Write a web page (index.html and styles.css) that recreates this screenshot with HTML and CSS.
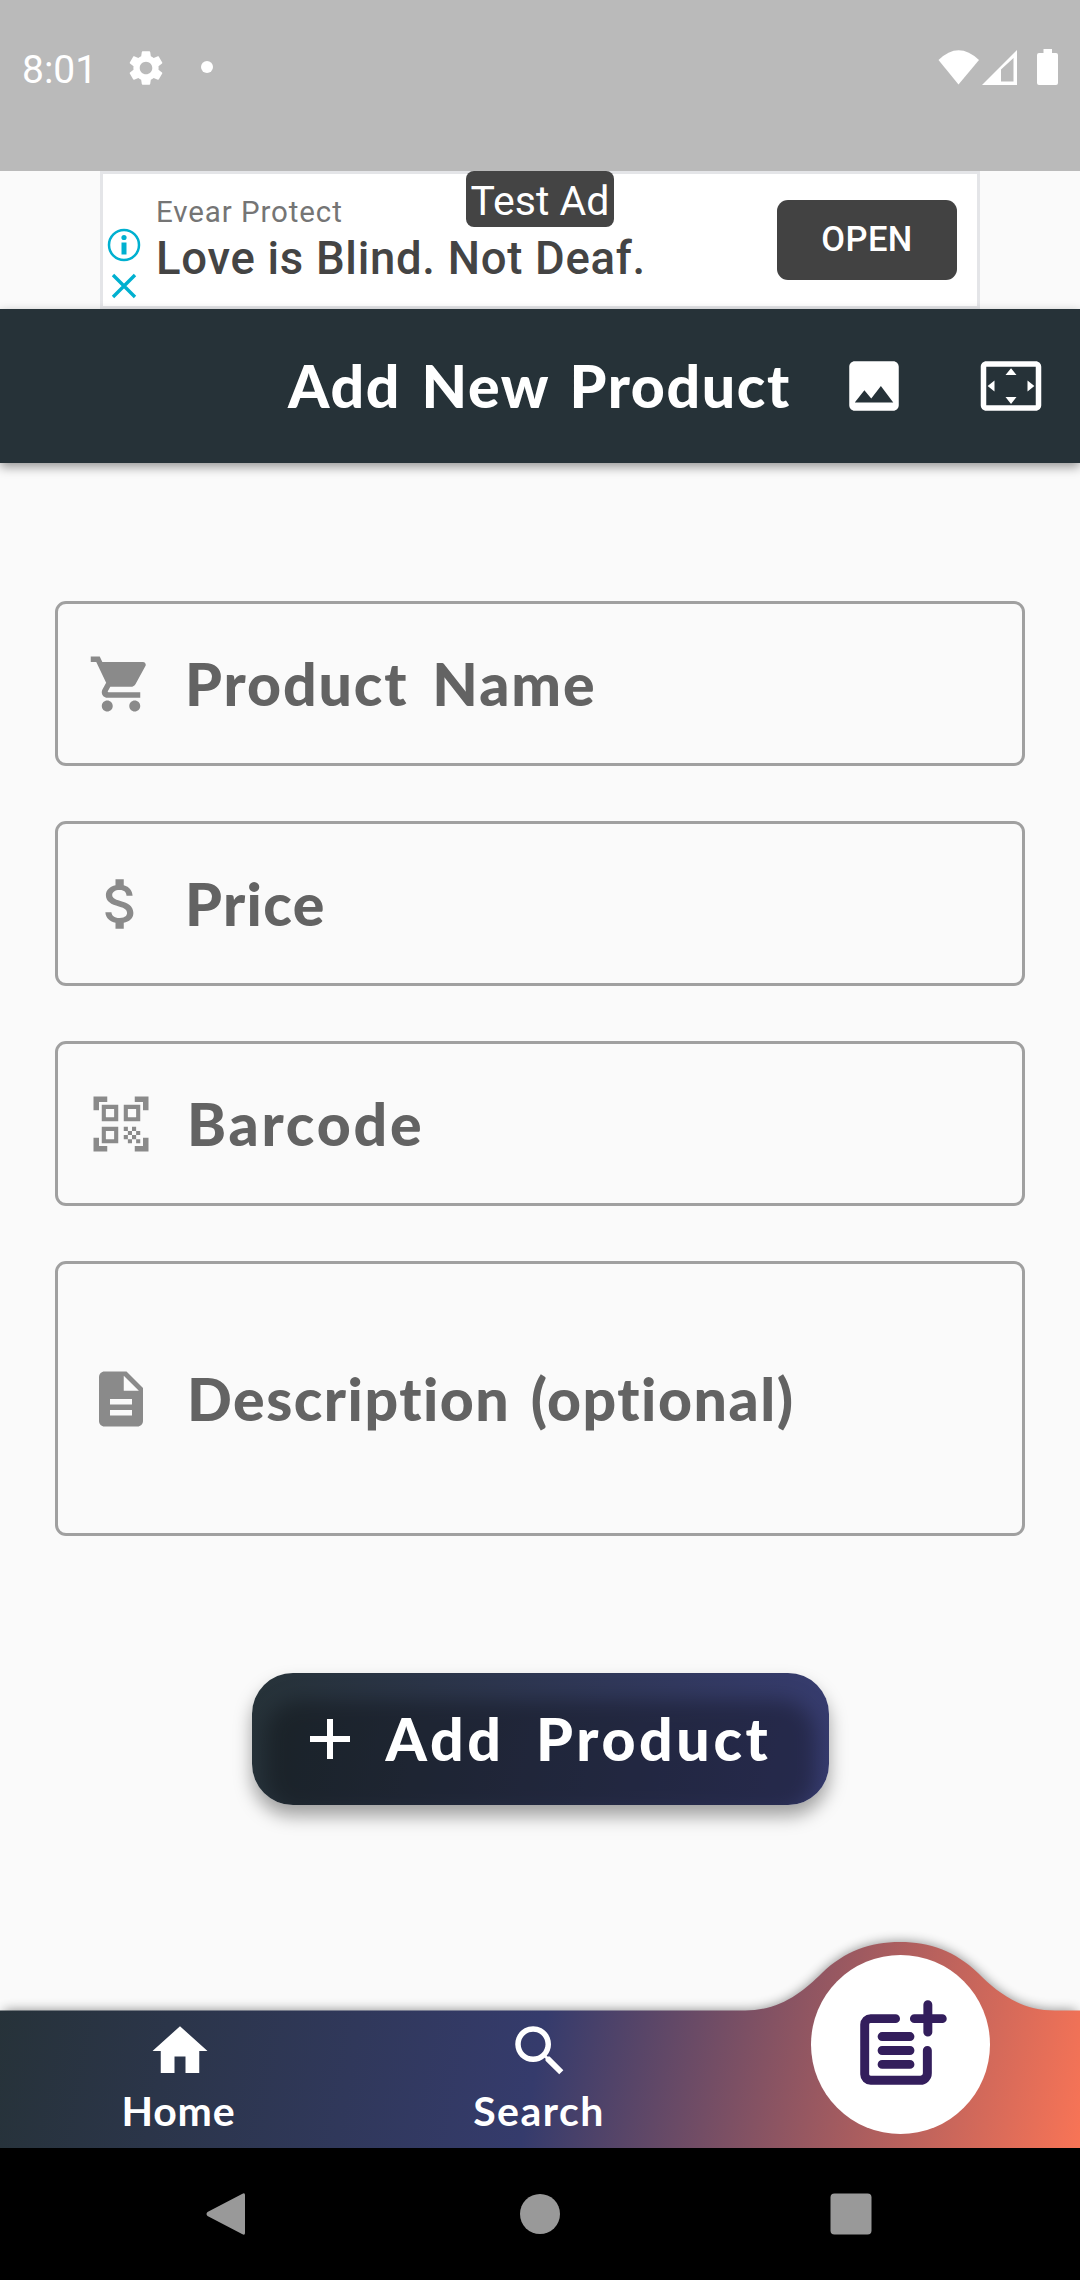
FILE: index.html
```html
<!DOCTYPE html>
<html lang="en">
<head>
<meta charset="utf-8">
<title>Add New Product</title>
<link rel="stylesheet" href="styles.css">
</head>
<body>
<div class="screen">
  <header class="status">
    <span class="time">8:01</span>
    <svg class="gear" viewBox="0 0 24 24"><path d="M19.14 12.94c.04-.3.06-.61.06-.94 0-.32-.02-.64-.07-.94l2.03-1.58c.18-.14.23-.41.12-.61l-1.92-3.32c-.12-.22-.37-.29-.59-.22l-2.39.96c-.5-.38-1.03-.7-1.62-.94l-.36-2.54c-.04-.24-.24-.41-.48-.41h-3.84c-.24 0-.43.17-.47.41l-.36 2.54c-.59.24-1.13.57-1.62.94l-2.39-.96c-.22-.08-.47 0-.59.22L2.74 8.87c-.12.21-.08.47.12.61l2.03 1.58c-.05.3-.09.63-.09.94s.02.64.07.94l-2.03 1.58c-.18.14-.23.41-.12.61l1.92 3.32c.12.22.37.29.59.22l2.39-.96c.5.38 1.03.7 1.62.94l.36 2.54c.05.24.24.41.48.41h3.84c.24 0 .44-.17.47-.41l.36-2.54c.59-.24 1.13-.56 1.62-.94l2.39.96c.22.08.47 0 .59-.22l1.92-3.32c.12-.22.07-.47-.12-.61l-2.01-1.58zM12 15.6c-1.98 0-3.6-1.62-3.6-3.6s1.62-3.6 3.6-3.6 3.6 1.62 3.6 3.6-1.62 3.6-3.6 3.6z"/></svg>
    <span class="dot"></span>
    <svg class="signals" viewBox="0 0 122 38">
      <path d="M.5 11Q20.500-8.500 41 11L20.500 35.500Z"/>
      <path fill-rule="evenodd" d="M44 36L79 1V36ZM63 20.500V32.500H75.500V9Z"/>
      <path d="M105.500 0H114V4H118Q120 4 120 6V34Q120 36 118 36H101Q99 36 99 34V6Q99 4 101 4H105.500Z"/>
    </svg>
  </header>

  <section class="ad-row">
    <div class="ad">
      <div class="ad-choices">
        <svg viewBox="0 0 34 34"><circle cx="17" cy="17" r="15" fill="none" stroke="#00b0d0" stroke-width="2.500"/><circle cx="17" cy="9.500" r="2.600"/><path d="M14.500 14.500h5v12h-5z"/></svg>
        <svg viewBox="0 0 34 34"><path d="M6 6l22 22M28 6L6 28" stroke="#00b0d0" stroke-width="3.400"/></svg>
      </div>
      <div class="ad-copy">
        <span class="ad-brand">Evear Protect</span>
        <span class="ad-title">Love is Blind. Not Deaf.</span>
      </div>
      <span class="ad-open">OPEN</span>
      <span class="ad-badge">Test Ad</span>
    </div>
  </section>

  <div class="appbar">
    <h1 class="title">Add New Product</h1>
    <svg class="icon" viewBox="0 0 24 24"><path d="M21 19V5c0-1.100-.9-2-2-2H5c-1.100 0-2 .9-2 2v14c0 1.100.9 2 2 2h14c1.100 0 2-.9 2-2zM8.500 13.500l2.500 3.010L14.500 12l4.500 6H5l3.500-4.500z"/></svg>
    <svg class="icon" viewBox="0 0 24 24"><path d="M12.010 5.500L10 8h4l-1.990-2.500zM18 10v4l2.500-1.990L18 10zM6 10l-2.500 2.010L6 14v-4zm8 6h-4l2.010 2.500L14 16zm7-13H3c-1.100 0-2 .9-2 2v14c0 1.100.9 2 2 2h18c1.100 0 2-.9 2-2V5c0-1.100-.9-2-2-2zm0 16.010H3V4.990h18v14.020z"/></svg>
  </div>

  <main class="form">
    <div class="field">
      <svg class="icon" viewBox="0 0 24 24"><path d="M7 18c-1.100 0-1.990.9-1.990 2S5.900 22 7 22s2-.9 2-2-.9-2-2-2zM1 2v2h2l3.600 7.590-1.350 2.450c-.16.28-.25.61-.25.96 0 1.100.9 2 2 2h12v-2H7.420c-.14 0-.25-.11-.25-.25l.03-.12.9-1.630h7.450c.75 0 1.410-.41 1.750-1.030l3.580-6.490c.08-.14.12-.31.12-.48 0-.55-.45-1-1-1H5.210l-.94-2H1zm16 16c-1.100 0-1.990.9-1.990 2s.89 2 1.990 2 2-.9 2-2-.9-2-2-2z"/></svg>
      <span class="label l-name">Product Name</span>
    </div>
    <div class="field">
      <svg class="icon" viewBox="0 0 24 24"><path d="M11.800 10.900c-2.270-.59-3-1.200-3-2.150 0-1.090 1.010-1.850 2.700-1.850 1.780 0 2.440.85 2.500 2.100h2.210c-.07-1.720-1.120-3.300-3.210-3.810V3h-3v2.160c-1.940.42-3.500 1.680-3.500 3.610 0 2.310 1.910 3.460 4.700 4.130 2.500.6 3 1.480 3 2.410 0 .69-.49 1.790-2.700 1.790-2.060 0-2.870-.92-2.980-2.100h-2.200c.12 2.190 1.760 3.420 3.680 3.830V21h3v-2.150c1.950-.37 3.500-1.500 3.500-3.550 0-2.840-2.430-3.810-4.700-4.400z"/></svg>
      <span class="label l-price">Price</span>
    </div>
    <div class="field">
      <svg class="icon" viewBox="0 0 24 24"><path d="M9.500 6.500v3h-3v-3h3M11 5H5v6h6V5zm-1.500 9.500v3h-3v-3h3M11 13H5v6h6v-6zm6.500-6.500v3h-3v-3h3M19 5h-6v6h6V5zm-6 8h1.500v1.500H13V13zm1.500 1.500H16V16h-1.500v-1.500zM16 13h1.500v1.500H16V13zm-3 3h1.500v1.500H13V16zm1.500 1.500H16V19h-1.500v-1.500zM16 16h1.500v1.500H16V16zm1.500-1.500H19V16h-1.500v-1.500zm0 3H19V19h-1.500v-1.500zM22 7h-2V4h-3V2h5v5zm0 15v-5h-2v3h-3v2h5zM2 22h5v-2H4v-3H2v5zM2 2v5h2V4h3V2H2z"/></svg>
      <span class="label l-code">Barcode</span>
    </div>
    <div class="field tall">
      <svg class="icon" viewBox="0 0 24 24"><path d="M14 2H6c-1.100 0-1.990.9-1.990 2L4 20c0 1.100.89 2 1.990 2H18c1.100 0 2-.9 2-2V8l-6-6zm2 16H8v-2h8v2zm0-4H8v-2h8v2zm-3-5V3.500L18.500 9H13z"/></svg>
      <span class="label l-desc">Description (optional)</span>
    </div>
    <button class="submit" type="button">
      <svg viewBox="0 0 42 42"><path d="M21 1v40M1 21h40" stroke="#fff" stroke-width="6" fill="none"/></svg>
      <span class="submit-text">Add Product</span>
    </button>
  </main>

  <nav class="tabs">
    <svg class="tabs-bg" viewBox="0 0 1080 236">
      <defs>
        <linearGradient id="bar" gradientUnits="userSpaceOnUse" x1="0" y1="30" x2="1080" y2="236">
          <stop offset="0" stop-color="#263238"/><stop offset=".5" stop-color="#353b6c"/><stop offset="1" stop-color="#f87456"/>
        </linearGradient>
        <filter id="soft" x="-5%" y="-20%" width="110%" height="140%"><feGaussianBlur stdDeviation="6"/></filter>
      </defs>
      <path d="M4 98.500H745C780 98.500 803 80 822 61C845 39 870 30 900 30S955 39 978 61C997 80 1020 98.500 1055 98.500H1076V236H4Z" fill="#000" opacity=".45" filter="url(#soft)"/>
      <path d="M0 98.500H745C780 98.500 803 80 822 61C845 39 870 30 900 30S955 39 978 61C997 80 1020 98.500 1055 98.500H1080V236H0Z" fill="url(#bar)"/>
    </svg>
    <a class="tab tab-home">
      <svg class="icon" viewBox="0 0 24 24"><path d="M10 20v-6h4v6h5v-8h3L12 3 2 12h3v8z"/></svg>
      <span>Home</span>
    </a>
    <a class="tab tab-search">
      <svg class="icon" viewBox="0 0 24 24"><path d="M15.500 14h-.79l-.28-.27C15.410 12.590 16 11.110 16 9.500 16 5.910 13.090 3 9.500 3S3 5.910 3 9.500 5.910 16 9.500 16c1.610 0 3.090-.59 4.230-1.570l.27.28v.79l5 4.990L20.490 19l-4.990-5zm-6 0C7.010 14 5 11.990 5 9.500S7.010 5 9.500 5 14 7.010 14 9.500 11.990 14 9.500 14z"/></svg>
      <span>Search</span>
    </a>
    <a class="tab-active">
      <svg viewBox="0 0 180 180"><g fill="none" stroke="#331e5c" stroke-width="9" stroke-linecap="round" stroke-linejoin="round" transform="translate(10 1)"><path d="M75 63H50a6 6 0 0 0-6 6V119a6 6 0 0 0 6 6h50a7 7 0 0 0 7-7V95"/><path d="M107.500 49V76.500M94 63h28M61.500 81h28M61.500 95h28M61.500 109h28"/></g></svg>
    </a>
  </nav>

  <footer class="system">
    <svg viewBox="0 0 46 46"><path d="M40 3Q43 1 43 4V42Q43 45 40 43L5.500 25Q3.500 23 5.500 21Z"/></svg>
    <svg viewBox="0 0 46 46"><circle cx="23" cy="23" r="20"/></svg>
    <svg viewBox="0 0 46 46"><rect x="2.500" y="2.500" width="41" height="41" rx="4"/></svg>
  </footer>
</div>
</body>
</html>
```

FILE: styles.css
```css
* { box-sizing: border-box; }
body { margin: 0; background: #fafafa; font-family: Lato, sans-serif; }
svg { display: block; flex: none; }
.screen { width: 1080px; height: 2280px; display: flex; flex-direction: column; overflow: hidden; }

.status { height: 171px; flex: none; background: #bababa; display: flex; align-items: flex-start; padding: 47px 19px 0 22px; }
.status svg { fill: #fff; }
.time { width: 103px; font: 400 39px/46px Roboto, sans-serif; color: #fff; }
.gear { width: 42px; height: 42px; }
.dot { width: 12px; height: 12px; margin: 14px 0 0 34px; border-radius: 50%; background: #fff; }
.signals { width: 122px; height: 38px; margin: 2px 1px 0 auto; }

.ad-row { height: 138px; flex: none; display: flex; justify-content: center; }
.ad { position: relative; width: 880px; background: #fff; border: 3px solid #e4e5e8; display: flex; align-items: flex-start; }
.ad-choices { width: 53px; padding: 54px 0 0 4px; display: grid; gap: 7px; fill: #00b0d0; }
.ad-choices svg { width: 34px; height: 34px; }
.ad-copy { display: flex; flex-direction: column; padding-top: 18px; white-space: nowrap; }
.ad-brand { font: 400 29.5px/40px Roboto, sans-serif; letter-spacing: .9px; color: #757575; }
.ad-title { font: 500 45.5px/54px Roboto, sans-serif; letter-spacing: .7px; color: #444; }
.ad-open { width: 180px; height: 80px; margin: 26px 20px 0 auto; border-radius: 11px; background: #424242; color: #fff; font: 500 34.5px/78px Roboto, sans-serif; letter-spacing: .4px; text-align: center; }
.ad-badge { position: absolute; left: 363px; top: -3px; width: 148px; height: 56px; border-radius: 8px; background: #444; color: #fff; font: 400 41px/60px Roboto, sans-serif; text-align: center; white-space: nowrap; }

.appbar { position: relative; height: 154px; flex: none; padding: 0 35px 0 288px; background: #263238; box-shadow: 0 4px 10px rgba(0,0,0,.4); display: flex; align-items: center; }
.title { width: 553px; margin: 0; color: #fff; font-size: 59px; line-height: 70px; font-weight: 900; letter-spacing: 1.6px; word-spacing: 5px; white-space: nowrap; }
.icon { width: 66px; height: 66px; }
.appbar .icon { fill: #fff; }
.appbar .icon + .icon { margin-left: 71px; }

.form { flex: 1; padding: 138px 55px 0; display: flex; flex-direction: column; gap: 55px; }
.field { height: 165px; flex: none; border: 3px solid #a0a0a0; border-radius: 11px; padding-left: 30px; display: flex; align-items: center; fill: #8a8a8a; }
.tall { height: 275px; }
.label { margin-left: 33px; color: #636363; font-size: 59px; line-height: 70px; font-weight: 900; white-space: nowrap; }
.l-name { margin-left: 31px; letter-spacing: 1.9px; word-spacing: 8px; }
.l-price { margin-left: 31px; letter-spacing: 1.4px; }
.l-code { letter-spacing: 2.8px; }
.l-desc { letter-spacing: 1.5px; word-spacing: 5px; }

.submit { position: relative; z-index: 0; overflow: hidden; align-self: center; width: 577px; height: 132px; margin-top: 82px; padding: 0 0 0 57px; border: 0; border-radius: 41px; background: linear-gradient(103deg, #263238, #373c70); box-shadow: 0 11px 18px rgba(0,0,0,.36); display: flex; align-items: center; color: #fff; font-family: inherit; }
.submit::before { content: ""; position: absolute; z-index: -1; inset: 27px 13px -8px; border-radius: 36px; background: rgba(0,0,0,.3); filter: blur(10px); }
.submit svg { width: 42px; height: 42px; }
.submit-text { margin-left: 35px; font-size: 59px; line-height: 70px; font-weight: 900; letter-spacing: 3.6px; word-spacing: 14px; white-space: nowrap; }

.tabs { position: relative; height: 137px; flex: none; display: grid; grid-template-columns: repeat(3, 360px); }
.tabs-bg { position: absolute; left: 0; bottom: 0; width: 1080px; height: 236px; }
.tab { position: relative; display: flex; flex-direction: column; align-items: center; padding-top: 7px; color: #fff; fill: #fff; font-size: 41px; line-height: 50px; font-weight: 700; }
.tab span { margin-top: 2px; }
.tab-home span { margin-right: 3px; letter-spacing: .8px; }
.tab-search span { margin-right: 2px; letter-spacing: 1.5px; }
.tab-active { position: relative; justify-self: center; width: 179px; height: 179px; margin-top: -56px; border-radius: 50%; background: #fff; }

.system { height: 132px; flex: none; background: #000; display: flex; justify-content: space-between; padding: 43px 206px 0 202px; fill: #999; }
.system svg { width: 46px; height: 46px; }
.system svg:nth-child(2) { margin-left: 4px; }
```
